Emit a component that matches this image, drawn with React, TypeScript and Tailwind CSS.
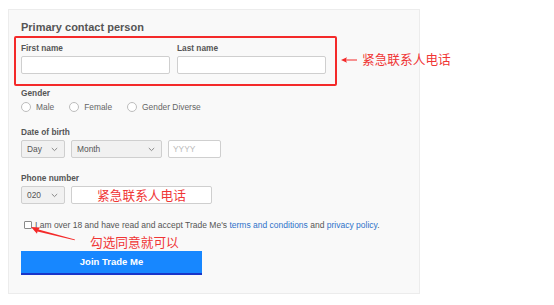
import React from "react";

const Chevron = () => (
  <svg width="7" height="5" viewBox="0 0 7 5" className="shrink-0">
    <path d="M0.8 1 L3.5 3.6 L6.2 1" fill="none" stroke="#888" strokeWidth="1" />
  </svg>
);

const Select = ({ label, w }: { label: string; w: string }) => (
  <div className={`${w} h-[18px] flex items-center justify-between pl-[5px] pr-[6px] bg-[#f1f1f1] border border-[#cfcfcf] rounded-[2px] text-[8.4px] text-[#555]`}>
    <span>{label}</span>
    <Chevron />
  </div>
);

const Radio = ({ label }: { label: string }) => (
  <div className="flex items-center gap-[5px]">
    <div className="w-[10px] h-[10px] rounded-full border border-[#bdbdbd] bg-white" />
    <span className="text-[8.4px] text-[#666]">{label}</span>
  </div>
);

const Label = ({ children }: { children: React.ReactNode }) => (
  <div className="text-[8.3px] leading-[12px] font-bold text-[#555]">{children}</div>
);

export default function App() {
  return (
    <div className="relative w-[554px] h-[305px] bg-white pt-[9px] pl-[8px] font-['Liberation_Sans',Arial,sans-serif]">
      <div className="w-[412px] h-[285px] border border-[#ececec] bg-[#f9f9f9] pl-[12px] pt-[9px] flex flex-col">
        <div className="text-[11px] leading-[16px] font-bold text-[#555]">Primary contact person</div>

        <div className="mt-[7px] flex gap-[7px]">
          <div className="flex flex-col">
            <Label>First name</Label>
            <div className="mt-[2px] w-[149px] h-[18px] bg-white border border-[#cfcfcf] rounded-[2px]" />
          </div>
          <div className="flex flex-col">
            <Label>Last name</Label>
            <div className="mt-[2px] w-[149px] h-[18px] bg-white border border-[#cfcfcf] rounded-[2px]" />
          </div>
        </div>

        <div className="mt-[13px]">
          <Label>Gender</Label>
        </div>
        <div className="mt-[2px] h-[12px] flex items-center gap-[15px]">
          <Radio label="Male" />
          <Radio label="Female" />
          <Radio label="Gender Diverse" />
        </div>

        <div className="mt-[13px]">
          <Label>Date of birth</Label>
        </div>
        <div className="mt-[2px] flex gap-[6px]">
          <Select label="Day" w="w-[44px]" />
          <Select label="Month" w="w-[91px]" />
          <div className="w-[53px] h-[18px] flex items-center pl-[4px] bg-white border border-[#cfcfcf] rounded-[2px] text-[8.4px] text-[#bbb]">
            YYYY
          </div>
        </div>

        <div className="mt-[14px]">
          <Label>Phone number</Label>
        </div>
        <div className="mt-[2px] flex gap-[6px]">
          <Select label="020" w="w-[44px]" />
          <div className="w-[141px] h-[18px] flex items-center justify-center bg-white border border-[#cfcfcf] rounded-[2px] text-[12.7px] text-[#f03535] font-['Noto_Sans_CJK_SC',sans-serif]">
            紧急联系人电话
          </div>
        </div>

        <div className="mt-[15px] h-[12px] flex items-center">
          <div className="ml-[3px] w-[8px] h-[8px] border border-[#8a8a8a] rounded-[1px] bg-white" />
          <span className="ml-[3px] text-[8.5px] text-[#555] whitespace-nowrap">
            I am over 18 and have read and accept Trade Me's{" "}
            <span className="text-[#2e72c9]">terms and conditions</span> and{" "}
            <span className="text-[#2e72c9]">privacy policy</span>.
          </span>
        </div>

        <div className="mt-[20px] w-[181px] h-[24px] flex items-center justify-center bg-[#1787ff] border-b-2 border-[#1a35c8] text-white text-[9.5px] font-bold">
          Join Trade Me
        </div>
      </div>

      {/* annotations */}
      <div className="absolute left-[14px] top-[36px] w-[323px] h-[50px] border-2 border-[#f42a2a] rounded-[2px]" />
      <svg className="absolute left-[340px] top-[56px]" width="18" height="8" viewBox="0 0 18 8">
        <path d="M1 4 L7 1.2 L6 3.4 L17 3.4 L17 4.6 L6 4.6 L7 6.8 Z" fill="#f42a2a" />
      </svg>
      <div className="absolute left-[362px] top-[50px] text-[12.7px] leading-[18px] text-[#f03535] font-['Noto_Sans_CJK_SC',sans-serif]">
        紧急联系人电话
      </div>
      <svg className="absolute left-[28px] top-[224px]" width="50" height="18" viewBox="0 0 50 18">
        <path d="M3 3 L12 3.5 L10.5 5.5 L47 15.5 L46.6 16.3 L9.5 7.5 L9 9.8 Z" fill="#f42a2a" />
      </svg>
      <div className="absolute left-[90px] top-[233px] text-[12.7px] leading-[18px] text-[#f03535] font-['Noto_Sans_CJK_SC',sans-serif]">
        勾选同意就可以
      </div>
    </div>
  );
}
